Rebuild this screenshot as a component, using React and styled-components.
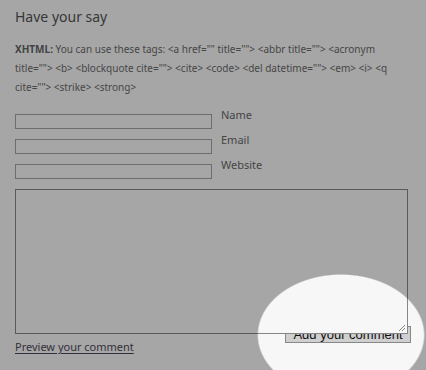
import React from "react";
import styled, { createGlobalStyle } from "styled-components";

const Global = createGlobalStyle`
  html, body { margin: 0; padding: 0; background: #ffffff; }
  body { width: 426px; height: 370px; overflow: hidden; font-family: "Noto Sans", "DejaVu Sans", sans-serif; }
`;

const Page = styled.div`
  position: relative;
  width: 426px;
  height: 370px;
  padding: 7px 15px 0 15px;
  box-sizing: border-box;
`;

const Heading = styled.h3`
  margin: 0;
  font-size: 14px;
  line-height: 20px;
  font-weight: normal;
  color: #555;
`;

const Allowed = styled.p`
  margin: 13px 0 0 0;
  font-size: 10px;
  line-height: 19px;
  color: #6c6c6c;
  strong { font-weight: bold; color: #666; }
`;

const Fields = styled.div`
  display: flex;
  flex-direction: column;
  gap: 10px;
  margin-top: 17px;
`;

const FieldRow = styled.div`
  display: flex;
  align-items: flex-start;
  gap: 9px;
`;

const TextInput = styled.div`
  width: 197px;
  height: 15px;
  box-sizing: border-box;
  border: 1px solid #a8a8a8;
  background: #fff;
`;

const Label = styled.span`
  font-size: 11px;
  line-height: 12px;
  margin-top: -5px;
  color: #6a6a6a;
`;

const Comment = styled.div`
  position: relative;
  z-index: 1;
  margin-top: 10px;
  width: 393px;
  height: 145px;
  box-sizing: border-box;
  border: 1px solid #8a8a8a;
  background: #fff;
`;

const Grip = styled.svg`
  position: absolute;
  right: 1px;
  bottom: 1px;
`;

const ButtonRow = styled.div`
  display: flex;
  justify-content: flex-end;
  margin-top: -8px;
  width: 396px;
`;

const Submit = styled.button`
  width: 126px;
  height: 17px;
  box-sizing: border-box;
  border: 1px solid #8c8c8c;
  background: #d6d6d6;
  font-family: "Liberation Sans", Arial, sans-serif;
  font-size: 13px;
  line-height: 15px;
  padding: 0;
  color: #111;
  text-align: center;
`;

const Preview = styled.a`
  display: block;
  width: fit-content;
  margin-top: -3px;
  font-size: 11px;
  line-height: 14px;
  color: #4f4a5a;
  text-decoration: underline;
  text-underline-offset: 2px;
`;

const Spotlight = styled.div`
  position: absolute;
  inset: 0;
  pointer-events: none;
  z-index: 5;
  background: radial-gradient(
    ellipse 84px 61px at 341px 335px,
    rgba(0, 0, 0, 0.03) 0%,
    rgba(0, 0, 0, 0.03) 98%,
    rgba(0, 0, 0, 0.35) 100%
  );
`;

export default function App() {
  return (
    <>
      <Global />
      <Page>
        <Heading>Have your say</Heading>
        <Allowed>
          <strong>XHTML:</strong> You can use these tags: &lt;a href="" title=""&gt; &lt;abbr title=""&gt; &lt;acronym
          title=""&gt; &lt;b&gt; &lt;blockquote cite=""&gt; &lt;cite&gt; &lt;code&gt; &lt;del datetime=""&gt; &lt;em&gt; &lt;i&gt; &lt;q
          cite=""&gt; &lt;strike&gt; &lt;strong&gt;
        </Allowed>
        <Fields>
          <FieldRow><TextInput /><Label>Name</Label></FieldRow>
          <FieldRow><TextInput /><Label>Email</Label></FieldRow>
          <FieldRow><TextInput /><Label>Website</Label></FieldRow>
        </Fields>
        <Comment>
          <Grip width="8" height="8" viewBox="0 0 8 8">
            <path d="M7 1 L1 7 M7 4 L4 7" stroke="#888" strokeWidth="1" fill="none" />
          </Grip>
        </Comment>
        <ButtonRow>
          <Submit>Add your comment</Submit>
        </ButtonRow>
        <Preview href="#">Preview your comment</Preview>
        <Spotlight />
      </Page>
    </>
  );
}
